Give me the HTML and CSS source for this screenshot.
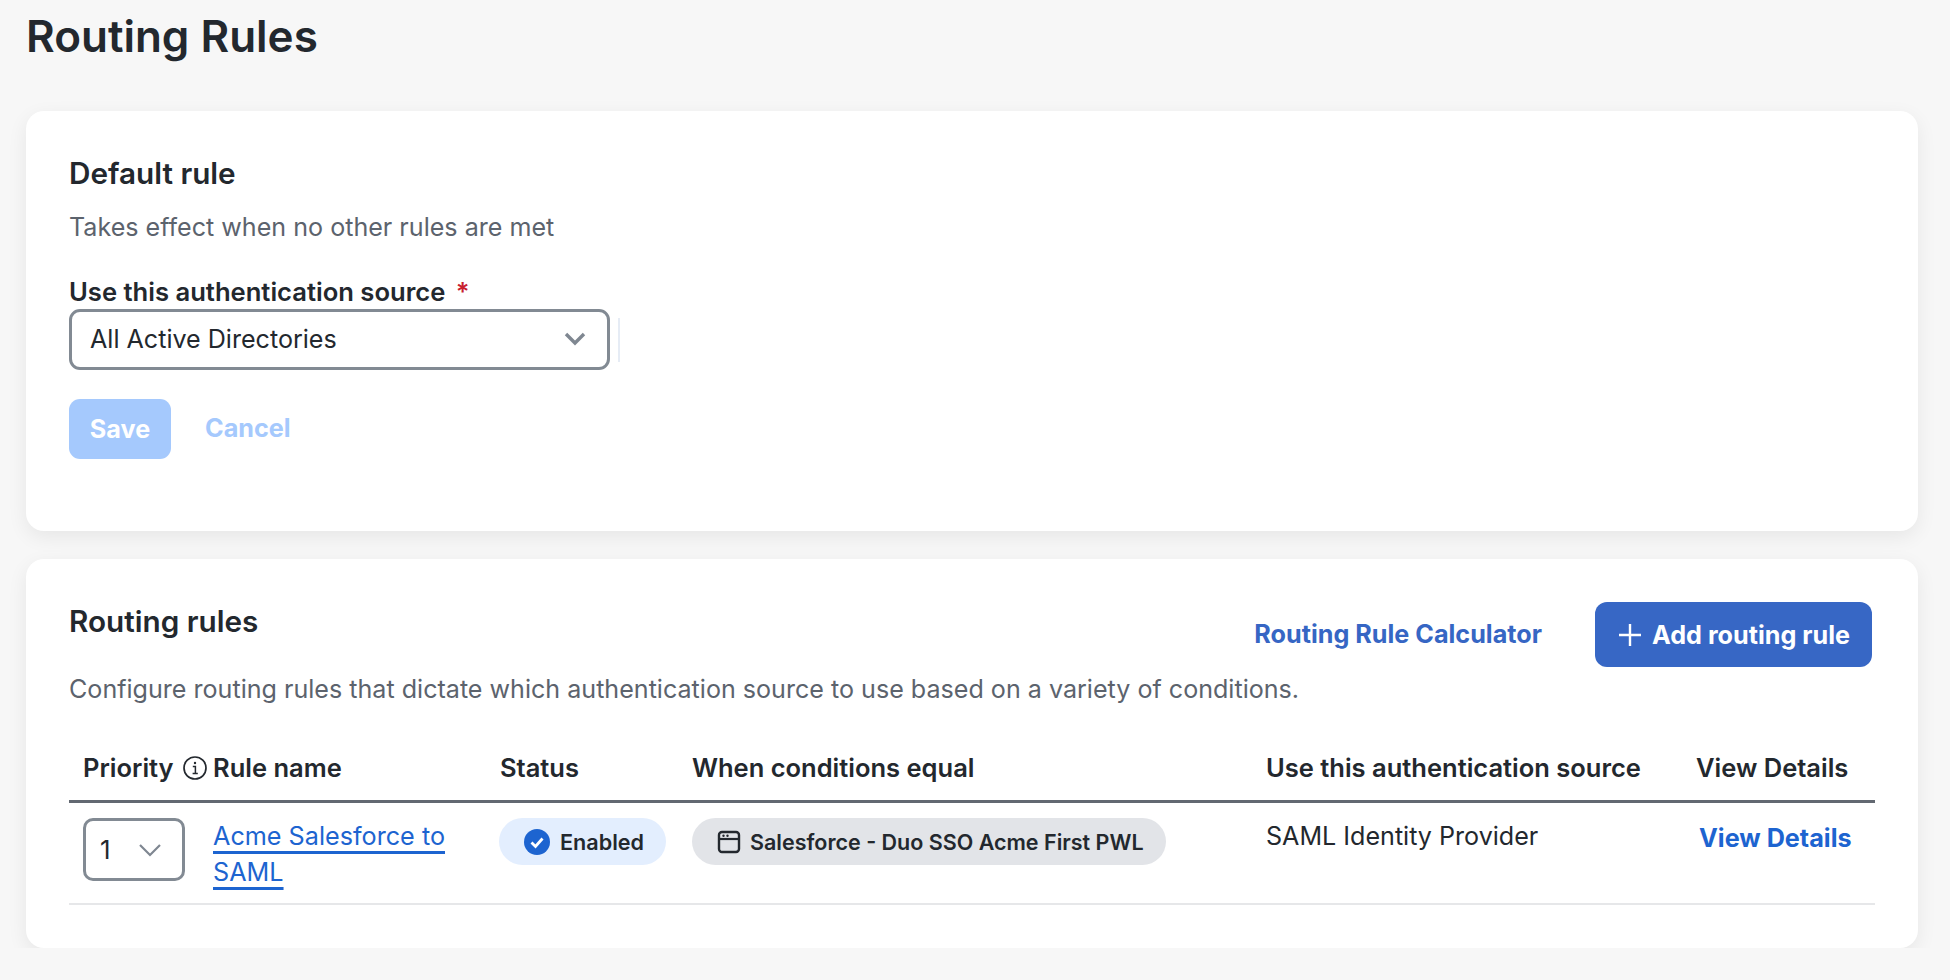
FILE: index.html
```html
<!DOCTYPE html>
<html lang="en">
<head>
  <meta charset="UTF-8" />
  <meta name="viewport" content="width=device-width, initial-scale=1.0" />
  <title>Routing Rules</title>
  <link rel="stylesheet" href="styles.css">
</head>
<body>
  <div class="container">
    <h1>Routing Rules</h1>

    <section class="card card-default">
      <h2>Default rule</h2>
      <p class="hint">Takes effect when no other rules are met</p>
      <label class="field-label">Use this authentication source <span class="required">*</span></label>
      <div class="select-row">
        <div class="select">
          <span>All Active Directories</span>
          <svg class="chevron" viewBox="0 0 22 14" width="22" height="14"><path d="M2 2l9 9 9-9" fill="none" stroke="#7f8791" stroke-width="3.4"/></svg>
        </div>
        <span class="select-edge"></span>
      </div>
      <div class="actions">
        <button class="btn-save">Save</button>
        <a class="link-cancel">Cancel</a>
      </div>
    </section>

    <section class="card card-rules">
      <div class="rules-head">
        <h2>Routing rules</h2>
        <div class="rules-tools">
          <a class="link-calc">Routing Rule Calculator</a>
          <button class="btn-add">
            <svg viewBox="0 0 24 24" width="24" height="24"><path d="M12 1v22M1 12h22" fill="none" stroke="#fff" stroke-width="2.4"/></svg>
            Add routing rule
          </button>
        </div>
      </div>
      <p class="hint hint-rules">Configure routing rules that dictate which authentication source to use based on a variety of conditions.</p>

      <table class="rules-table">
        <colgroup>
          <col class="col-priority"><col class="col-name"><col class="col-status"><col class="col-when"><col class="col-source"><col class="col-view">
        </colgroup>
        <thead>
          <tr>
            <th class="cell-priority">
              <span class="priority-head">Priority
                <svg class="info" viewBox="0 0 24 24" width="24" height="24"><circle cx="12" cy="12" r="11" fill="none" stroke="#23282e" stroke-width="1.7"/><path d="M9.8 10.6h2.6v7M9.6 17.6h5.2" fill="none" stroke="#23282e" stroke-width="1.5"/><circle cx="12" cy="7" r="1.2" fill="#23282e"/></svg>
              </span>
            </th>
            <th>Rule name</th>
            <th>Status</th>
            <th>When conditions equal</th>
            <th>Use this authentication source</th>
            <th>View Details</th>
          </tr>
        </thead>
        <tbody>
          <tr>
            <td class="cell-priority">
              <div class="priority-select">
                <span>1</span>
                <svg viewBox="0 0 24 14" width="24" height="14"><path d="M2 2l10 10L22 2" fill="none" stroke="#7f8791" stroke-width="2.2"/></svg>
              </div>
            </td>
            <td class="cell-name"><a class="rule-link">Acme Salesforce to SAML</a></td>
            <td>
              <span class="pill pill-enabled">
                <svg viewBox="0 0 26 26" width="26" height="26"><circle cx="13" cy="13" r="13" fill="#1d64d0"/><path d="M7.5 13.5l4 4 7-8" fill="none" stroke="#fff" stroke-width="2.8"/></svg>
                Enabled
              </span>
            </td>
            <td>
              <span class="pill pill-condition">
                <svg viewBox="0 0 24 24" width="24" height="24"><rect x="2" y="2" width="20" height="20" rx="3" fill="none" stroke="#23282e" stroke-width="2.4"/><path d="M2 9h20" stroke="#23282e" stroke-width="2.2"/><circle cx="6.5" cy="5.7" r="1.2" fill="#23282e"/><circle cx="10.5" cy="5.7" r="1.2" fill="#23282e"/></svg>
                Salesforce - Duo SSO Acme First PWL
              </span>
            </td>
            <td class="cell-source">SAML Identity Provider</td>
            <td class="cell-view"><a class="view-link">View Details</a></td>
          </tr>
        </tbody>
      </table>
    </section>
  </div>
</body>
</html>
```

FILE: styles.css
```css
body {
  font-family: "Inter", "Liberation Sans", sans-serif;
  background-color: #f7f7f7;
  color: #23282e;
  margin: 0;
  padding: 0;
}
.container {
  padding: 0 32px 0 26px;
}
h1 {
  font-size: 44px;
  line-height: 48px;
  font-weight: 600;
  margin: 0;
  padding: 12px 0 51px;
}
h2 {
  font-size: 29.7px;
  line-height: 36px;
  font-weight: 600;
  margin: 0;
}
.card {
  background: #fff;
  border-radius: 18px;
  box-shadow: 0 6px 20px rgba(0,0,0,0.07);
  padding: 44px 43px 0;
  box-sizing: border-box;
}
.card-default {
  height: 420px;
  margin-bottom: 28px;
}
.card-rules {
  height: 389px;
  padding-top: 43px;
}
.hint {
  font-size: 25.1px;
  line-height: 36px;
  color: #5c636d;
  margin: 0;
}
.card-default .hint {
  margin-top: 18px;
}
.field-label {
  display: block;
  font-size: 25.6px;
  line-height: 32px;
  font-weight: 600;
  margin-top: 31px;
}
.required {
  color: #c8202f;
  margin-left: 4px;
}
.select-row {
  display: flex;
  align-items: center;
  gap: 8px;
  margin-top: 1px;
}
.select {
  width: 541px;
  height: 61px;
  box-sizing: border-box;
  border: 3px solid #828a93;
  border-radius: 11px;
  display: flex;
  align-items: center;
  justify-content: space-between;
  padding: 0 21px 1px 18px;
  font-size: 25.1px;
}
.select-edge {
  width: 2px;
  height: 44px;
  background: #e6ecf5;
}
.actions {
  display: flex;
  align-items: center;
  gap: 34px;
  margin-top: 29px;
}
button {
  font-family: inherit;
  font-weight: 700;
  font-size: 25.2px;
  border: none;
  color: #fff;
}
.btn-save {
  width: 102px;
  height: 60px;
  background: #a5c9fd;
  border-radius: 11px;
  padding: 0;
}
.link-cancel {
  color: #a5c9fd;
  font-size: 25.2px;
  font-weight: 700;
  padding-bottom: 2px;
}
.rules-head {
  display: flex;
  justify-content: space-between;
  align-items: flex-start;
}
.rules-head h2 {
  padding-top: 1px;
}
.rules-tools {
  display: flex;
  align-items: center;
  gap: 53px;
  margin-right: 3px;
}
.link-calc {
  color: #3666c4;
  font-size: 25.2px;
  font-weight: 700;
  padding-bottom: 2px;
}
.btn-add {
  display: flex;
  align-items: center;
  gap: 10px;
  height: 65px;
  width: 277px;
  background: #3767c5;
  border-radius: 12px;
  padding: 0 0 0 23px;
  white-space: nowrap;
}
.hint-rules {
  margin-top: 4px;
}
.rules-table {
  width: 100%;
  table-layout: fixed;
  border-collapse: collapse;
  font-size: 25.5px;
  margin-top: 28px;
}
.col-priority { width: 144px; }
.col-name { width: 287px; }
.col-status { width: 192px; }
.col-when { width: 574px; }
.col-source { width: 430px; }
th {
  text-align: left;
  font-weight: 600;
  height: 65px;
  padding: 0;
  border-bottom: 3px solid #626871;
}
td {
  vertical-align: top;
  padding: 15px 0 0;
  height: 81px;
  border-bottom: 2px solid #e6e7e9;
}
.cell-priority {
  padding-left: 14px;
}
.priority-head {
  display: flex;
  align-items: center;
  gap: 9px;
  white-space: nowrap;
}
.info {
  flex: none;
}
.priority-select {
  width: 102px;
  height: 63px;
  box-sizing: border-box;
  border: 3px solid #828a93;
  border-radius: 10px;
  display: flex;
  align-items: center;
  justify-content: space-between;
  padding: 0 20px 0 14px;
  font-size: 26px;
}
.cell-name {
  font-size: 25.2px;
  line-height: 36px;
  padding-right: 40px;
}
.rule-link {
  color: #1d64d0;
  text-decoration: underline;
  text-decoration-thickness: 2.5px;
  text-underline-offset: 6px;
}
.pill {
  display: inline-flex;
  align-items: center;
  border-radius: 24px;
  font-weight: 600;
  height: 47px;
  box-sizing: border-box;
}
.pill-enabled {
  background: #e3eefe;
  font-size: 21.6px;
  gap: 10px;
  margin-left: -1px;
  padding: 0 22px 0 25px;
}
.pill-condition {
  background: #e2e4e8;
  font-size: 21.5px;
  gap: 9px;
  padding: 0 22px 0 25px;
}
.cell-source {
  font-size: 25.1px;
  line-height: 36px;
}
.cell-view {
  padding-left: 3px;
  padding-top: 19px;
}
.view-link {
  color: #1d64d0;
  font-weight: 700;
  font-size: 25.2px;
}
```
